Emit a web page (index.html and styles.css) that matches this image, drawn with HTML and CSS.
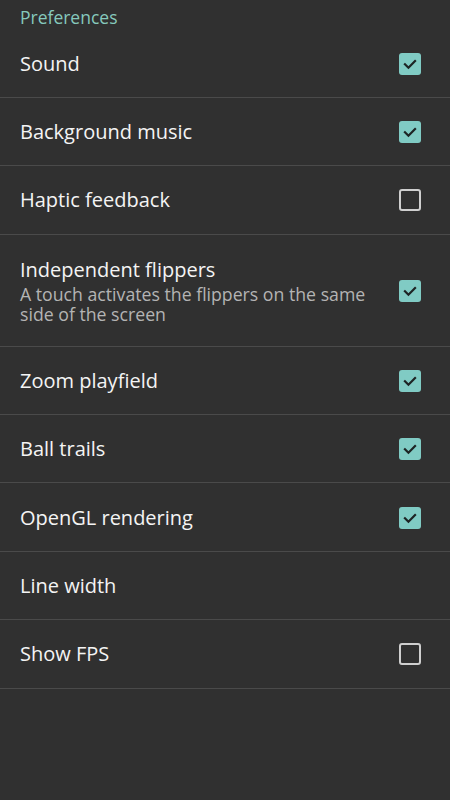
FILE: index.html
```html
<!DOCTYPE html>
<html>
<head>
<meta charset="utf-8">
<link rel="stylesheet" href="styles.css">
</head>
<body>
<div class="screen">
  <div class="category">Preferences</div>
  <div class="list">
    <div class="row">
      <div class="texts"><div class="title">Sound</div></div>
      <span class="check on"><svg viewBox="0 0 24 24"><path d="M6.5 12.2l3.8 3.8 7.2-7.2"/></svg></span>
    </div>
    <div class="row">
      <div class="texts"><div class="title">Background music</div></div>
      <span class="check on"><svg viewBox="0 0 24 24"><path d="M6.5 12.2l3.8 3.8 7.2-7.2"/></svg></span>
    </div>
    <div class="row">
      <div class="texts"><div class="title">Haptic feedback</div></div>
      <span class="check off"></span>
    </div>
    <div class="row tall">
      <div class="texts">
        <div class="title">Independent flippers</div>
        <div class="summary">A touch activates the flippers on the same side of the screen</div>
      </div>
      <span class="check on"><svg viewBox="0 0 24 24"><path d="M6.5 12.2l3.8 3.8 7.2-7.2"/></svg></span>
    </div>
    <div class="row">
      <div class="texts"><div class="title">Zoom playfield</div></div>
      <span class="check on"><svg viewBox="0 0 24 24"><path d="M6.5 12.2l3.8 3.8 7.2-7.2"/></svg></span>
    </div>
    <div class="row">
      <div class="texts"><div class="title">Ball trails</div></div>
      <span class="check on"><svg viewBox="0 0 24 24"><path d="M6.5 12.2l3.8 3.8 7.2-7.2"/></svg></span>
    </div>
    <div class="row">
      <div class="texts"><div class="title">OpenGL rendering</div></div>
      <span class="check on"><svg viewBox="0 0 24 24"><path d="M6.5 12.2l3.8 3.8 7.2-7.2"/></svg></span>
    </div>
    <div class="row">
      <div class="texts"><div class="title">Line width</div></div>
    </div>
    <div class="row">
      <div class="texts"><div class="title">Show FPS</div></div>
      <span class="check off"></span>
    </div>
  </div>
</div>
</body>
</html>
```

FILE: styles.css
```css
html, body {
  margin: 0;
  padding: 0;
  background: #303030;
}
.screen {
  width: 450px;
  height: 800px;
  background: #303030;
  font-family: "Open Sans", "Noto Sans", sans-serif;
  color: #f2f2f2;
  overflow: hidden;
}
.category {
  height: 29.5px;
  box-sizing: border-box;
  padding-left: 20px;
  padding-top: 5px;
  font-size: 17.5px;
  line-height: 24px;
  color: #86c9bd;
}
.list {
  display: flex;
  flex-direction: column;
}
.row {
  height: 68.4px;
  box-sizing: border-box;
  border-bottom: 1.4px solid #4a4a4a;
  display: flex;
  align-items: center;
  padding: 1px 29px 0 20px;
  gap: 20px;
}
.row.tall {
  height: 112px;
}
.texts {
  flex: 1;
  min-width: 0;
}
.title {
  font-size: 20px;
  line-height: 26px;
  color: #f4f4f4;
}
.summary {
  font-size: 17.7px;
  line-height: 20px;
  color: #b4b4b4;
  margin-top: 1px;
}
.check {
  width: 22px;
  height: 22px;
  box-sizing: border-box;
  border-radius: 3px;
  flex: none;
  display: flex;
  align-items: center;
  justify-content: center;
}
.check.on {
  background: #80cbc4;
}
.check.off {
  border: 2.5px solid #cfcfcf;
}
.check svg {
  width: 22px;
  height: 22px;
  fill: none;
  stroke: #1d2424;
  stroke-width: 2.4;
  stroke-linecap: square;
}
```
